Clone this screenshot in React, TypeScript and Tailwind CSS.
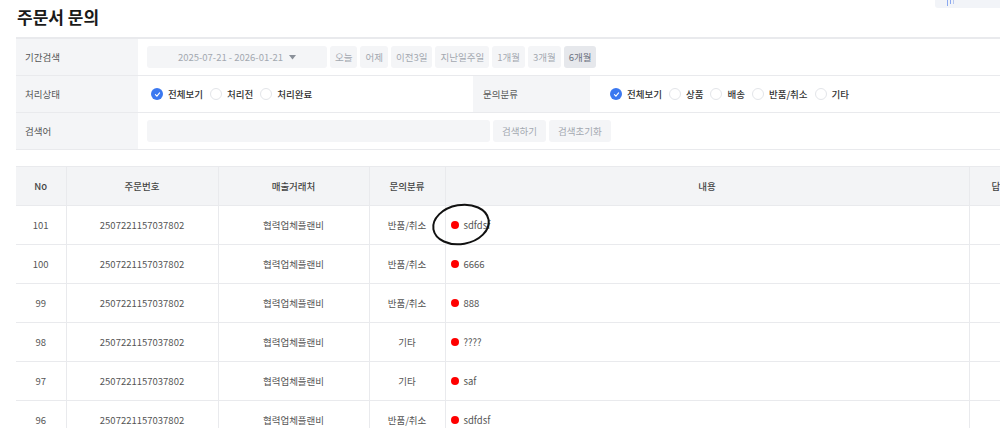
import React from "react";

const rows = [
  { no: 101, order: "2507221157037802", vendor: "협력업체플랜비", type: "반품/취소", text: "sdfdsf", mark: true },
  { no: 100, order: "2507221157037802", vendor: "협력업체플랜비", type: "반품/취소", text: "6666" },
  { no: 99, order: "2507221157037802", vendor: "협력업체플랜비", type: "반품/취소", text: "888" },
  { no: 98, order: "2507221157037802", vendor: "협력업체플랜비", type: "기타", text: "????" },
  { no: 97, order: "2507221157037802", vendor: "협력업체플랜비", type: "기타", text: "saf" },
  { no: 96, order: "2507221157037802", vendor: "협력업체플랜비", type: "반품/취소", text: "sdfdsf" },
];

function Radio({ label, checked }: { label: string; checked?: boolean }) {
  return (
    <label className="flex items-center gap-[5px] mr-[7px]">
      {checked ? (
        <span className="w-[12px] h-[12px] rounded-full bg-[#3b78f0] flex items-center justify-center">
          <svg width="7" height="7" viewBox="0 0 10 10">
            <path d="M2 5.2 L4.2 7.4 L8 2.8" fill="none" stroke="white" strokeWidth="1.6" strokeLinecap="round" />
          </svg>
        </span>
      ) : (
        <span className="w-[12px] h-[12px] rounded-full border border-[#e3e5e9] bg-white" />
      )}
      <span className="text-[#333] font-medium">{label}</span>
    </label>
  );
}

function Chip({ children, active }: { children: React.ReactNode; active?: boolean }) {
  return (
    <span
      className={
        active
          ? "h-[22px] px-[5px] flex items-center rounded-[3px] bg-[#e6e8ec] text-[#6b7280]"
          : "h-[22px] px-[5px] flex items-center rounded-[3px] bg-[#f4f5f7] text-[#a3a8b0]"
      }
    >
      {children}
    </span>
  );
}

function Label({ children }: { children: React.ReactNode }) {
  return (
    <div className="w-[122px] shrink-0 self-stretch bg-[#f4f5f7] flex items-center pl-[9px] text-[#555]">
      {children}
    </div>
  );
}

export default function App() {
  return (
    <div className="relative w-[1000px] h-[428px] overflow-hidden bg-white font-['Noto_Sans_CJK_KR','Noto_Sans',sans-serif] text-[9.5px]">
      <div className="absolute top-0 left-[935px] w-[80px] h-[8px] bg-[#f2f4f8] rounded-b-[3px] flex items-start gap-[2px] pl-[12px]">
        <span className="w-[1px] h-[6px] bg-[#8aa8f0]" />
        <span className="w-[1px] h-[4px] bg-[#8aa8f0]" />
        <span className="w-[1px] h-[4px] bg-[#b8c8f0]" />
      </div>

      <div className="w-[1120px] pl-[16px]">
        <div className="h-[37px] pt-[6px] pl-[1px]">
          <h1 className="text-[17px] leading-[22px] font-bold text-[#1a1a1a]">주문서 문의</h1>
        </div>

        <div className="border-t-2 border-[#e9eaed]">
          <div className="h-[37px] flex items-center border-b border-[#e9eaed]">
            <Label>기간검색</Label>
            <div className="flex items-center gap-[3px] pl-[9px]">
              <span className="w-[180px] h-[22px] rounded-[3px] bg-[#f4f5f7] text-[#a3a8b0] flex items-center justify-center gap-[6px]">
                2025-07-21 - 2026-01-21
                <svg width="7" height="5" viewBox="0 0 7 5">
                  <path d="M0 0 L7 0 L3.5 4.5 Z" fill="#8a9099" />
                </svg>
              </span>
              <Chip>오늘</Chip>
              <Chip>어제</Chip>
              <Chip>이전3일</Chip>
              <Chip>지난일주일</Chip>
              <Chip>1개월</Chip>
              <Chip>3개월</Chip>
              <Chip active>6개월</Chip>
            </div>
          </div>

          <div className="h-[37px] flex items-center border-b border-[#e9eaed]">
            <Label>처리상태</Label>
            <div className="w-[335px] flex items-center pl-[13px]">
              <Radio label="전체보기" checked />
              <Radio label="처리전" />
              <Radio label="처리완료" />
            </div>
            <div className="w-[117px] shrink-0 self-stretch bg-[#f4f5f7] flex items-center pl-[10px] text-[#555]">
              문의분류
            </div>
            <div className="flex items-center pl-[20px]">
              <Radio label="전체보기" checked />
              <Radio label="상품" />
              <Radio label="배송" />
              <Radio label="반품/취소" />
              <Radio label="기타" />
            </div>
          </div>

          <div className="h-[37px] flex items-center border-b border-[#e9eaed]">
            <Label>검색어</Label>
            <div className="flex items-center gap-[3px] pl-[9px]">
              <span className="w-[343px] h-[22px] rounded-[3px] bg-[#f4f5f7]" />
              <Chip>
                <span className="px-[4px]">검색하기</span>
              </Chip>
              <Chip>
                <span className="px-[4px]">검색초기화</span>
              </Chip>
            </div>
          </div>
        </div>

        <table className="mt-[16px] w-[1104px] border-collapse table-fixed text-[#555]">
          <colgroup>
            <col className="w-[50px]" />
            <col className="w-[152px]" />
            <col className="w-[151px]" />
            <col className="w-[76px]" />
            <col className="w-[524px]" />
            <col />
          </colgroup>
          <thead>
            <tr className="h-[39px] bg-[#f3f4f6] text-[#444] font-medium">
              <th className="font-medium border-t border-[#e9eaed]">No</th>
              <th className="font-medium border-t border-l border-[#e9eaed]">주문번호</th>
              <th className="font-medium border-t border-l border-[#e9eaed]">매출거래처</th>
              <th className="font-medium border-t border-l border-[#e9eaed]">문의분류</th>
              <th className="font-medium border-t border-l border-[#e9eaed]">내용</th>
              <th className="font-medium border-t border-l border-[#e9eaed] text-left pl-[22px]">답변상태</th>
            </tr>
          </thead>
          <tbody>
            {rows.map((r) => (
              <tr key={r.no} className="h-[39px]">
                <td className="text-center border-t border-[#e9eaed]">{r.no}</td>
                <td className="text-center border-t border-l border-[#e9eaed]">{r.order}</td>
                <td className="text-center border-t border-l border-[#e9eaed]">{r.vendor}</td>
                <td className="text-center border-t border-l border-[#e9eaed]">{r.type}</td>
                <td className="relative border-t border-l border-[#e9eaed] pl-[5px]">
                  <div className="flex items-center gap-[5px]">
                    <span className="w-[8px] h-[8px] rounded-full bg-[#ff0000]" />
                    <span>{r.text}</span>
                  </div>
                  {r.mark && (
                    <svg
                      className="absolute left-[-16px] top-[-4px]"
                      width="62"
                      height="45"
                      viewBox="0 0 62 45"
                    >
                      <ellipse
                        cx="31"
                        cy="22.5"
                        rx="28"
                        ry="19.5"
                        transform="rotate(-10 31 22.5)"
                        fill="none"
                        stroke="#111"
                        strokeWidth="2"
                      />
                    </svg>
                  )}
                </td>
                <td className="border-t border-l border-[#e9eaed]" />
              </tr>
            ))}
          </tbody>
        </table>
      </div>
    </div>
  );
}
